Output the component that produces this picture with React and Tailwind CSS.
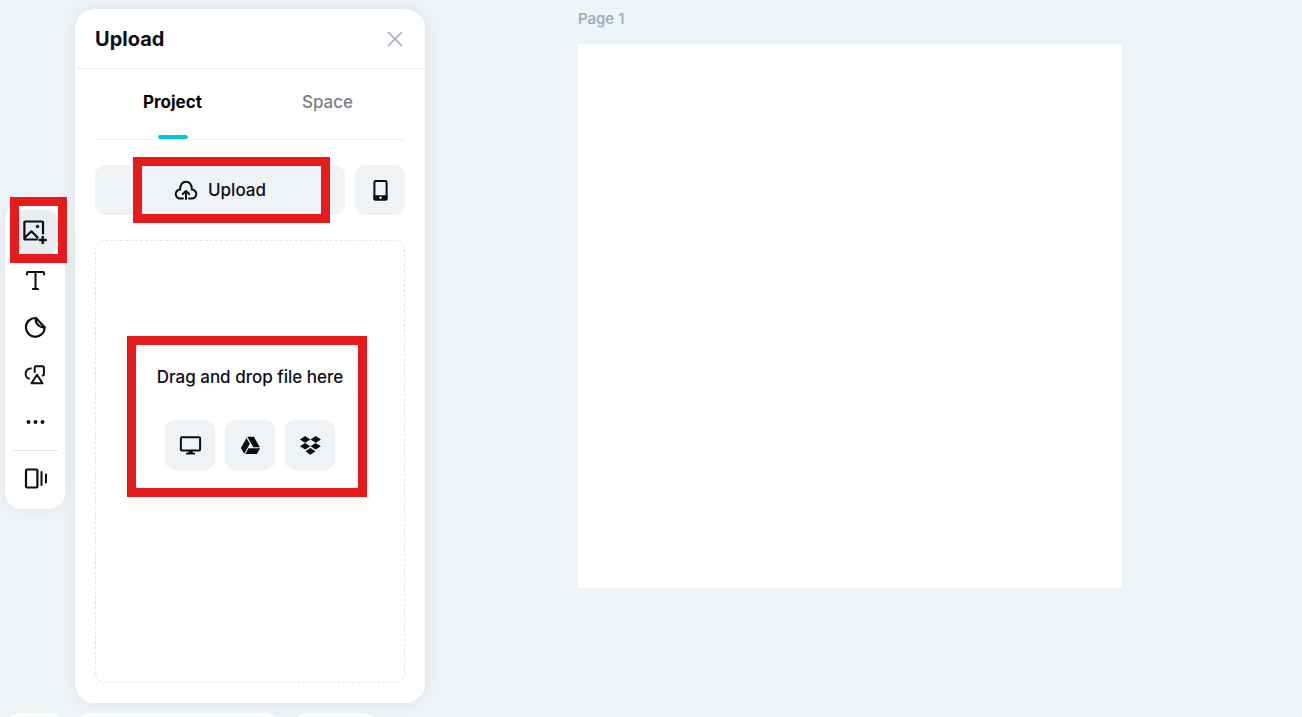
import React, { useState } from "react";

const iconProps = {
  width: 24,
  height: 24,
  viewBox: "-0.5 -0.5 24 24",
  fill: "none",
  stroke: "currentColor",
  strokeWidth: 2,
  strokeLinecap: "round",
  strokeLinejoin: "round",
  overflow: "visible",
  "aria-hidden": true,
};

const ImageAddIcon = () => (
  <svg {...iconProps}>
    <path d="M13.500 18H1.700a.8.8 0 0 1-.8-.8V.800a.8.8 0 0 1 .8-.8h17a.8.8 0 0 1 .8.8V12" strokeWidth="2.200" />
    <path d="M1.500 16l6.400-6.200 6.200 6.200" strokeWidth="2.200" />
    <circle cx="14" cy="5" r="1.700" fill="currentColor" stroke="none" />
    <path d="M19.200 14.500v8M15.200 18.500h8" strokeLinecap="butt" strokeWidth="2.400" />
  </svg>
);

const TextIcon = () => (
  <svg {...iconProps}>
    <path d="M3.400 6V4.700c0-.7.4-1.100 1.100-1.100h15c.7 0 1.100.4 1.100 1.100V6M12 3.600v17M9.400 20.600h5.200" />
  </svg>
);

const StickerIcon = () => (
  <svg {...iconProps} strokeWidth="2.200">
    <path d="M12 2.500a9.400 9.400 0 1 0 9.200 9.400L12.600 2.500c-.9 3 .1 5.400 2.200 7.300 1.900 1.700 4.400 2.400 6.600 2" />
  </svg>
);

const ShapesIcon = () => (
  <svg {...iconProps}>
    <path d="M8.200 6a5.300 5.300 0 0 0-2 10.400" strokeLinecap="butt" />
    <path d="M11.200 9.500V4.900c0-.7.5-1.200 1.200-1.200h6.800c.7 0 1.200.5 1.200 1.200v6.800c0 .7-.5 1.200-1.200 1.200" />
    <path d="M13.500 12.200l5.500 8.600H8z" />
  </svg>
);

const MoreIcon = () => (
  <svg {...iconProps} fill="currentColor" stroke="none">
    <circle cx="5" cy="12.400" r="2" />
    <circle cx="12" cy="12.400" r="2" />
    <circle cx="19" cy="12.400" r="2" />
  </svg>
);

const PagesIcon = () => (
  <svg {...iconProps}>
    <rect x="2.500" y="2" width="11.400" height="18" rx="1" strokeWidth="2.200" />
    <path d="M18 4.500v13M22.500 7v8" strokeWidth="2" />
  </svg>
);

const CloudUploadIcon = () => (
  <svg {...iconProps}>
    <path d="M8.500 20H5.700A4.400 4.400 0 0 1 5.600 11.100C5.800 6.300 8.100 3.200 11.500 3.200s5.700 3.100 5.900 7.900a4.400 4.400 0 0 1-.1 8.900h-2.800" />
    <path d="M11.500 20.400v-7M8.300 15.600l3.200-3 3.200 3" />
  </svg>
);

const PhoneIcon = () => (
  <svg {...iconProps}>
    <rect x="5.900" y="2.500" width="12.200" height="18.600" rx="1.400" />
    <path d="M5 16.800h14v4a1.200 1.200 0 0 1-1.200 1.200H6.200A1.200 1.200 0 0 1 5 20.800z" fill="currentColor" stroke="none" />
    <circle cx="12" cy="19.200" r="1.200" fill="#eff3f6" stroke="none" />
  </svg>
);

const MonitorIcon = () => (
  <svg {...iconProps}>
    <rect x="2.400" y="3.700" width="19.200" height="13.400" rx="1" />
    <path d="M10.200 17h3.600l.6 2.200h1.400c.5 0 .8.400.8.900v.9H7.400v-.9c0-.5.3-.9.8-.9h1.400z" fill="currentColor" stroke="none" />
  </svg>
);

const DriveIcon = () => (
  <svg {...iconProps} fill="currentColor" stroke="none">
    <path d="M8.800 3.200h6.600l6 10.500h-6.600z" />
    <path d="M8 4.400l3.300 5.800-5.600 10L2.400 14.500z" />
    <path d="M10 14.800h11.600l-3.200 5.700H6.800z" />
  </svg>
);

const DropboxIcon = () => (
  <svg {...iconProps} fill="currentColor" stroke="none">
    <path d="M6.600 2.600l5.200 3.300-5.200 3.300-5.200-3.300zM17.200 2.600l5.200 3.300-5.200 3.300-5.200-3.300zM6.600 9.400l5.200 3.300-5.200 3.300-5.200-3.300zM17.200 9.400l5.200 3.300-5.200 3.300-5.200-3.300zM11.900 14.600l5 3.200-5 3.400-5-3.400z" />
  </svg>
);

const CloseIcon = () => (
  <svg {...iconProps} strokeWidth="1.600">
    <path d="M5 5l13 13M18 5l-13 13" />
  </svg>
);

const tools = [
  { id: "upload", label: "Upload", Icon: ImageAddIcon },
  { id: "text", label: "Text", Icon: TextIcon },
  { id: "stickers", label: "Stickers", Icon: StickerIcon },
  { id: "shapes", label: "Shapes", Icon: ShapesIcon },
  { id: "more", label: "More", Icon: MoreIcon },
];

const sources = [
  { id: "computer", label: "Computer", Icon: MonitorIcon },
  { id: "drive", label: "Google Drive", Icon: DriveIcon },
  { id: "dropbox", label: "Dropbox", Icon: DropboxIcon },
];

// Red frame drawn over the control it points out
const Highlight = ({ className }) => (
  <span className={`absolute pointer-events-none border-[9px] border-[#e81b1c] z-10 ${className}`} />
);

const Toolbar = () => {
  const [active, setActive] = useState("upload");

  return (
    <nav className="self-center w-[60px] shrink-0 flex flex-col items-center bg-white rounded-2xl pt-[7px] pb-2 shadow-[0_0_16px_rgba(40,80,100,0.07)]">
      <div className="flex flex-col gap-[2px]">
        {tools.map(({ id, label, Icon }) => (
          <button
            key={id}
            aria-label={label}
            onClick={() => setActive(id)}
            className={`relative size-[45px] flex items-center justify-center rounded-xl ${
              active === id ? "bg-[#e9edf0]" : ""
            }`}
          >
            <Icon />
            {id === "upload" && <Highlight className="-top-[13px] -bottom-2 -left-[3px] -right-[9px]" />}
          </button>
        ))}
      </div>
      <hr className="w-[45px] mt-[7px] mb-[5px] border-[#e4e7ea]" />
      <button aria-label="Pages" className="size-[45px] flex items-center justify-center rounded-xl">
        <PagesIcon />
      </button>
    </nav>
  );
};

const UploadPanel = () => {
  const [tab, setTab] = useState("Project");

  return (
    <section className="w-[350px] shrink-0 flex flex-col bg-white rounded-[20px] shadow-[0_0_16px_rgba(40,80,100,0.09)]">
      <header className="flex items-center justify-between h-[60px] shrink-0 pl-5 pr-[18px] border-b border-[#ebeff1]">
        <h2 className="text-xl font-bold">Upload</h2>
        <button aria-label="Close" className="text-[#a1abb7]">
          <CloseIcon />
        </button>
      </header>

      <div className="flex-1 flex flex-col px-5 pb-5">
        {/* Tabs */}
        <div role="tablist" className="flex h-[71px] shrink-0 border-b border-[#ebeff1]">
          {["Project", "Space"].map((t) => (
            <button
              key={t}
              role="tab"
              aria-selected={tab === t}
              onClick={() => setTab(t)}
              className={`relative flex-1 pb-[2px] text-[17px] ${
                tab === t ? "font-bold text-black" : "font-medium text-[#7b7f85]"
              }`}
            >
              {t}
              {tab === t && (
                <span className="absolute bottom-0 left-1/2 -translate-x-1/2 w-[30px] h-1 rounded-xs bg-[#00c7dc]" />
              )}
            </button>
          ))}
        </div>

        <div className="flex gap-[10px] mt-[25px]">
          <button className="relative flex-1 h-[50px] flex items-center justify-center gap-[10px] rounded-[10px] bg-[#eff3f6] text-[17px] leading-6 font-medium">
            <CloudUploadIcon />
            Upload
            <Highlight className="-top-2 -bottom-2 left-[38px] right-[15px]" />
          </button>
          <button aria-label="Upload from phone" className="size-[50px] flex items-center justify-center rounded-[10px] bg-[#eff3f6]">
            <PhoneIcon />
          </button>
        </div>

        {/* Drop zone */}
        <div className="flex-1 mt-[25px] pb-[89px] flex items-center justify-center rounded-[10px] border border-dashed border-[#e3e6e8]">
          <div className="relative flex flex-col items-center gap-[31px]">
            <p className="text-[17px] leading-6 font-medium">Drag and drop file here</p>
            <div className="flex gap-[10px]">
              {sources.map(({ id, label, Icon }) => (
                <button
                  key={id}
                  aria-label={label}
                  className="size-[50px] flex items-center justify-center rounded-[10px] bg-[#eff3f6]"
                >
                  <Icon />
                </button>
              ))}
            </div>
            <Highlight className="-top-[29px] -bottom-[27px] -left-[30px] -right-6" />
          </div>
        </div>
      </div>
    </section>
  );
};

const App = () => {
  return (
    <div className="h-screen overflow-hidden flex flex-col bg-[#eef3f6] text-[#0b0d14] font-['Inter',sans-serif]">
      <div className="flex-1 min-h-0 flex gap-[10px] pl-[5px] pt-[9px] pb-[10px]">
        <Toolbar />
        <UploadPanel />
        <main className="flex-1 flex justify-center pl-[10px] pr-[47px]">
          <div className="w-full max-w-[544px]">
            <p className="mb-[15px] text-[15px] leading-5 font-medium text-[#9ba8b5]">Page 1</p>
            <div className="aspect-square bg-white" />
          </div>
        </main>
      </div>

      {/* Top edge of the bottom bar */}
      <footer className="flex gap-[10px] h-1 shrink-0 pl-[5px]">
        <div className="w-[60px] h-[60px] shrink-0 rounded-2xl bg-white" />
        <div className="w-[206px] h-[60px] shrink-0 rounded-2xl bg-white" />
        <div className="w-[88px] h-[60px] shrink-0 rounded-2xl bg-white" />
      </footer>
    </div>
  );
};

export default App;
